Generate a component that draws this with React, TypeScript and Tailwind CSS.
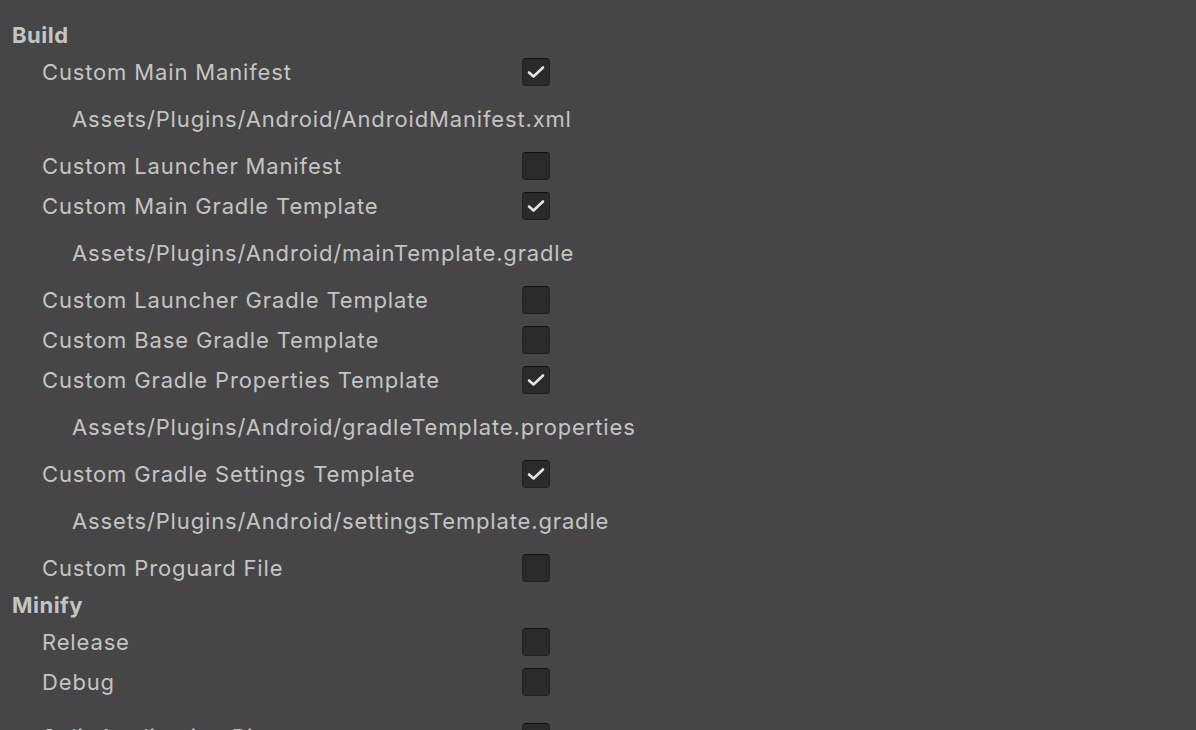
import React from "react";

type Row =
  | { kind: "heading"; text: string }
  | { kind: "toggle"; text: string; checked: boolean }
  | { kind: "path"; text: string }
  | { kind: "spacer" };

const rows: Row[] = [
  { kind: "heading", text: "Build" },
  { kind: "toggle", text: "Custom Main Manifest", checked: true },
  { kind: "path", text: "Assets/Plugins/Android/AndroidManifest.xml" },
  { kind: "toggle", text: "Custom Launcher Manifest", checked: false },
  { kind: "toggle", text: "Custom Main Gradle Template", checked: true },
  { kind: "path", text: "Assets/Plugins/Android/mainTemplate.gradle" },
  { kind: "toggle", text: "Custom Launcher Gradle Template", checked: false },
  { kind: "toggle", text: "Custom Base Gradle Template", checked: false },
  { kind: "toggle", text: "Custom Gradle Properties Template", checked: true },
  { kind: "path", text: "Assets/Plugins/Android/gradleTemplate.properties" },
  { kind: "toggle", text: "Custom Gradle Settings Template", checked: true },
  { kind: "path", text: "Assets/Plugins/Android/settingsTemplate.gradle" },
  { kind: "toggle", text: "Custom Proguard File", checked: false },
  { kind: "heading", text: "Minify" },
  { kind: "toggle", text: "Release", checked: false },
  { kind: "toggle", text: "Debug", checked: false },
  { kind: "spacer" },
  { kind: "toggle", text: "Split Application Binary", checked: false },
];

function Checkbox({ checked }: { checked: boolean }) {
  return (
    <div className="w-[28px] h-[28px] shrink-0 rounded-[4px] bg-[#2a2a2a] border border-[#212121] border-t-[#101010] flex items-center justify-center">
      {checked && (
        <svg width="18" height="14" viewBox="0 0 18 14" fill="none">
          <path
            d="M2 7.5L6.5 11.5L16 2.5"
            stroke="#e4e4e4"
            strokeWidth="2.6"
            strokeLinecap="round"
            strokeLinejoin="round"
          />
        </svg>
      )}
    </div>
  );
}

export default function App() {
  return (
    <div
      className="w-[1196px] h-[730px] overflow-hidden bg-[#464646] text-[#c4c4c4] pt-[18px] text-[22px] tracking-[0.85px]"
      style={{ fontFamily: "Inter, 'Noto Sans', sans-serif" }}
    >
      {rows.map((row, i) => {
        if (row.kind === "heading")
          return (
            <div key={i} className="h-[34px] flex items-center pl-[12px] font-bold tracking-[0.5px]">
              {row.text}
            </div>
          );
        if (row.kind === "path")
          return (
            <div key={i} className="h-[54px] flex items-center pl-[72px]">
              {row.text}
            </div>
          );
        if (row.kind === "spacer") return <div key={i} className="h-[15px]" />;
        return (
          <div key={i} className="h-[40px] flex items-center pl-[42px]">
            <div className="w-[480px] whitespace-nowrap">{row.text}</div>
            <Checkbox checked={row.checked} />
          </div>
        );
      })}
    </div>
  );
}
